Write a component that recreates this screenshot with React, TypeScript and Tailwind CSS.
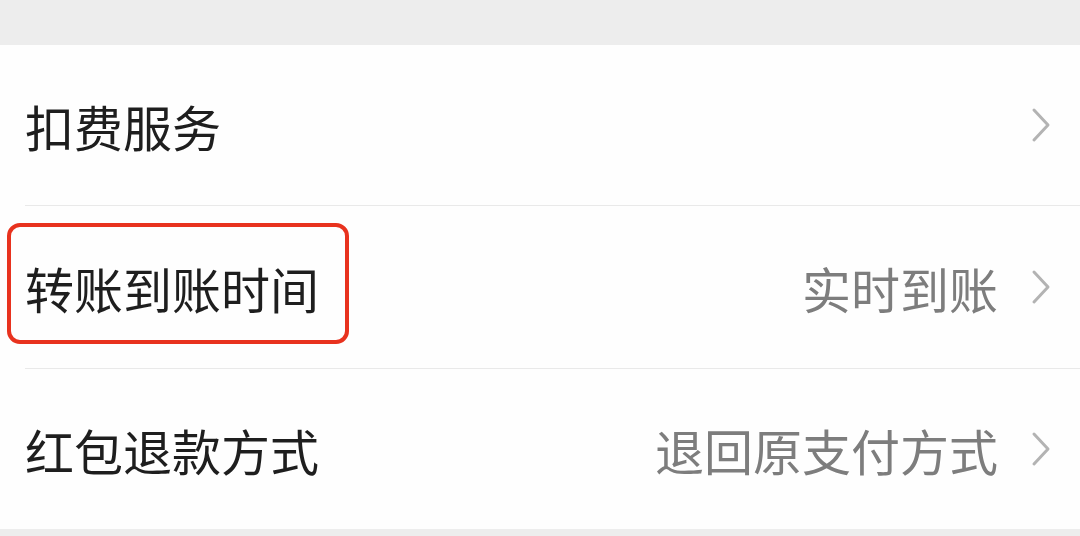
import React from 'react';

const Chevron = () => (
  <svg width="22" height="40" viewBox="0 0 22 40" className="shrink-0">
    <path d="M4 5 L18 20 L4 35" fill="none" stroke="#b3b3b3" strokeWidth="3" strokeLinecap="round" strokeLinejoin="round" />
  </svg>
);

interface RowProps {
  label: string;
  value?: string;
  height: string;
  divider?: boolean;
  highlight?: boolean;
}

const Row: React.FC<RowProps> = ({ label, value, height, divider, highlight }) => (
  <div className="relative">
    <div className={`${height} flex items-center pl-[25px] pr-[28px]`}>
      <span className="text-[49px] leading-none text-[#1e1e1e]">{label}</span>
      <div className="ml-auto flex items-center gap-[32px]">
        {value && <span className="text-[49px] leading-none text-[#7d7d7d]">{value}</span>}
        <Chevron />
      </div>
    </div>
    {divider && <div className="ml-[25px] h-px bg-[#e9e9e9]"></div>}
    {highlight && (
      <div className="absolute left-[7px] top-[17px] w-[342px] h-[121px] rounded-[13px] border-[4px] border-[#e8321e]"></div>
    )}
  </div>
);

export default function App() {
  return (
    <div
      className="w-[1080px] h-[536px] bg-[#ededed] overflow-hidden flex flex-col"
      style={{ fontFamily: '"Noto Sans CJK SC", "Noto Sans", sans-serif' }}
    >
      <div className="h-[45px] shrink-0"></div>
      <div className="bg-[#fefefe]">
        <Row label="扣费服务" height="h-[160px]" divider />
        <Row label="转账到账时间" value="实时到账" height="h-[162px]" divider highlight />
        <Row label="红包退款方式" value="退回原支付方式" height="h-[160px]" />
      </div>
    </div>
  );
}
